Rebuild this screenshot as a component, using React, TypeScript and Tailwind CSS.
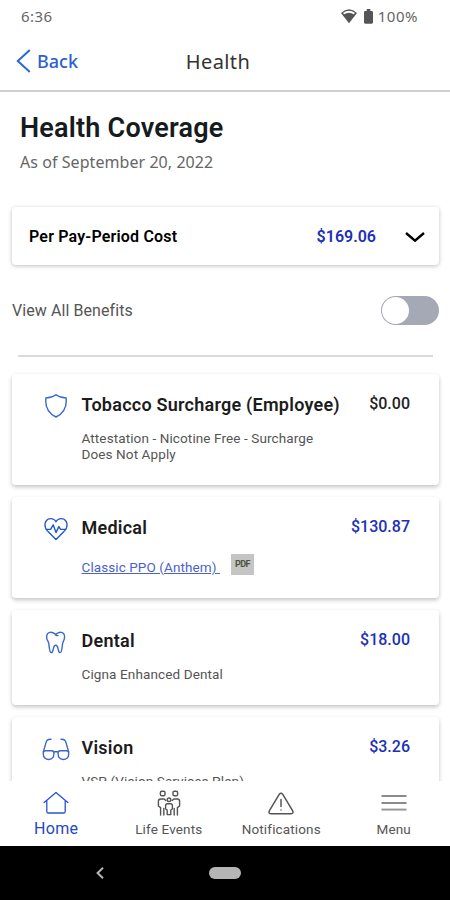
import type { ReactNode } from "react";

type Benefit = {
  name: string;
  price: string;
  icon: ReactNode;
  plan: ReactNode;
  muted?: boolean;
};

function ShieldIcon() {
  return (
    <svg width="24" height="26" viewBox="0 0 24 26" fill="none" stroke="#3a68c8" strokeWidth="1.4" strokeLinejoin="round">
      <path d="M12 1.8C9.6 3.7 5.6 4.9 2 4.7C1 11.8 3.2 19.6 12 24C20.8 19.6 23 11.8 22 4.7C18.4 4.9 14.4 3.7 12 1.8Z" />
    </svg>
  );
}

function HeartIcon() {
  return (
    <svg width="24" height="24" viewBox="0 0 24 24" fill="none" stroke="#2559c5" strokeWidth="1.4" strokeLinejoin="round" strokeLinecap="round">
      <path d="M12 4.8C11 2.8 9 1.6 6.6 1.6C2.6 1.6 -.3 6 1.6 11C2.4 12.8 3.4 14 4.3 14.8L12 22.6L19.7 14.8C20.6 14 21.6 12.8 22.4 11C24.3 6 21.4 1.6 17.4 1.6C15 1.6 13 2.8 12 4.8Z" />
      <path d="M2.4 12.4H6.6L9.2 7.8L12 15.6L14.8 9.6L16.6 12.4H21.6" />
    </svg>
  );
}

function ToothIcon() {
  return (
    <svg width="22" height="23" viewBox="0 0 22 23" fill="none" stroke="#3a68c8" strokeWidth="1.4" strokeLinejoin="round" strokeLinecap="round">
      <path d="M10.6 3.2C8.6 1.8 6.6 1 4.8 1.4C2.4 2 1.4 4.4 1.7 7C1.9 9.2 3.4 10.4 3.8 12.6C4.3 15.6 4.2 21.6 6.4 21.6C8.9 21.6 7.4 14.2 10.7 14.2C14 14.2 12.5 21.6 15 21.6C17.2 21.6 17 15.6 17.6 12.6C18 10.4 19.3 9.2 19.5 7C19.8 4.4 18.8 2 16.4 1.4C14 .9 12.2 2.3 10.6 3.2C9.6 3.6 11.6 4.8 13 4.6" />
    </svg>
  );
}

function GlassesIcon() {
  return (
    <svg width="28" height="23" viewBox="0 0 28 23" fill="none" stroke="#3a68c8" strokeWidth="1.4" strokeLinejoin="round" strokeLinecap="round">
      <path d="M9 1.3C5.9 1 4.6 2 4 4.6L1.4 13.6M19 1.3C22.1 1 23.4 2 24 4.6L26.6 13.6" />
      <path d="M1.3 15Q1.3 12.8 3.4 12.8H9.8Q11.9 12.8 11.9 15V16C11.9 19.4 9.6 21.5 6.6 21.5C3.6 21.5 1.3 19.4 1.3 16ZM16.1 15Q16.1 12.8 18.2 12.8H24.6Q26.7 12.8 26.7 15V16C26.7 19.4 24.4 21.5 21.4 21.5C18.4 21.5 16.1 19.4 16.1 16Z" />
      <path d="M11.5 13.8H16.5" />
    </svg>
  );
}

function HomeIcon() {
  return (
    <svg width="26" height="24" viewBox="0 0 26 24" fill="none" stroke="#2457cf" strokeWidth="1.3" strokeLinejoin="round" strokeLinecap="round">
      <path d="M1.2 11.6L13 1.6L24.8 11.6M3.8 9.8V20.4Q3.8 22 5.4 22H20.6Q22.2 22 22.2 20.4V9.8" />
    </svg>
  );
}

function FamilyIcon() {
  return (
    <svg width="24" height="26" viewBox="0 0 24 26" fill="none" stroke="#555" strokeWidth="1.4" strokeLinejoin="round" strokeLinecap="round">
      <rect x="3.4" y="1.2" width="4.6" height="4.6" rx="1.4" />
      <rect x="16" y="1.2" width="4.6" height="4.6" rx="1.4" />
      <circle cx="12" cy="9.8" r="1.8" />
      <path d="M3.6 25V17.6L1.4 16V11.2Q1.4 9 3.6 9H7.2L8.8 10.6M20.4 25V17.6L22.6 16V11.2Q22.6 9 20.4 9H16.8L15.2 10.6" />
      <path d="M8.6 19V15.6Q8.6 13.8 10.4 13.8H13.6Q15.4 13.8 15.4 15.6V19L13.8 20V24.6H10.2V20ZM6.8 25V18.4M17.2 25V18.4" />
    </svg>
  );
}

function WarningIcon() {
  return (
    <svg width="26" height="23" viewBox="0 0 26 23" fill="none" stroke="#555" strokeWidth="1.5" strokeLinejoin="round" strokeLinecap="round">
      <path d="M11.2 2.4Q13 .1 14.8 2.4L24.7 18.9Q25.7 21.6 23.2 21.8H2.8Q.3 21.6 1.3 18.9Z" />
      <path d="M13 7.6V14.6M13 17.9V18.1" />
    </svg>
  );
}

function MenuIcon() {
  return (
    <svg width="26" height="18" viewBox="0 0 26 18" fill="none" strokeWidth="1.6">
      <path d="M.5 2H25.5M.5 9H25.5" stroke="#666" />
      <path d="M.5 15.6H25.5" stroke="#999" strokeWidth="2" />
    </svg>
  );
}

const benefits: Benefit[] = [
  {
    name: "Tobacco Surcharge (Employee)",
    price: "$0.00",
    icon: <ShieldIcon />,
    muted: true,
    plan: (
      <p className="mt-[13px] text-[13.5px] leading-4 tracking-[0.11px] text-[#555]">
        Attestation - Nicotine Free - Surcharge
        <br />
        Does Not Apply
      </p>
    ),
  },
  {
    name: "Medical",
    price: "$130.87",
    icon: <HeartIcon />,
    plan: (
      <div className="mt-3.5 flex h-[21px] items-center">
        <a href="#" className="mt-1 text-[13.5px] leading-4 tracking-[0.09px] whitespace-pre text-[#4b63c9] underline">
          {"Classic PPO (Anthem) "}
        </a>
        <span className="ml-[11px] flex h-[21px] w-[23px] items-center justify-center bg-[#c4c4c4] text-[9px] font-bold tracking-[-0.6px] text-[#4a5340]">
          PDF
        </span>
      </div>
    ),
  },
  {
    name: "Dental",
    price: "$18.00",
    icon: <ToothIcon />,
    plan: <p className="mt-[13px] text-[13.5px] leading-4 tracking-[0.12px] text-[#555]">Cigna Enhanced Dental</p>,
  },
  {
    name: "Vision",
    price: "$3.26",
    icon: <GlassesIcon />,
    plan: <p className="mt-[13px] text-[13.5px] leading-4 tracking-[0.12px] text-[#555]">VSP (Vision Services Plan)</p>,
  },
];

const tabs = [
  { label: "Home", icon: <HomeIcon />, active: true },
  { label: "Life Events", icon: <FamilyIcon /> },
  { label: "Notifications", icon: <WarningIcon /> },
  { label: "Menu", icon: <MenuIcon /> },
];

function BenefitCard({ name, price, icon, plan, muted }: Benefit) {
  return (
    <div className="flex rounded-sm bg-white pt-[19px] pr-[29px] pb-[23px] pl-7 shadow-[0_2px_4px_rgba(0,0,0,0.24)]">
      <div className="flex h-[26px] w-8 shrink-0 items-center justify-center">{icon}</div>
      <div className="ml-[9.5px] min-w-0 flex-1 whitespace-nowrap">
        <div className="flex items-center justify-between">
          <h2 className="text-[18px] leading-6 font-semibold tracking-[0.24px] text-[#1c1c1c]">{name}</h2>
          <span className={`-mt-0.5 text-base leading-5 font-medium ${muted ? "text-[#222]" : "text-[#1c31b5]"}`}>
            {price}
          </span>
        </div>
        {plan}
      </div>
    </div>
  );
}

export default function App() {
  return (
    <div className="flex h-[900px] w-[450px] flex-col overflow-hidden bg-white font-['Roboto',sans-serif]">
      {/* Status bar */}
      <div className="flex h-8 shrink-0 items-center justify-between pr-8 pl-[21px] font-['Noto_Sans',sans-serif] text-[15px] text-[#666]">
        <span className="tracking-[0.4px]">6:36</span>
        <div className="flex items-center">
          <svg width="18" height="16" viewBox="0 0 18 16">
            <path d="M9 15.2L1 5Q9-2.4 17 5Z" fill="#555" />
            <path d="M3 5Q9 .6 15 5L13.8 6.2Q9 3.2 4.2 6.2Z" fill="#fff" />
          </svg>
          <svg className="ml-1.5" width="9" height="15" viewBox="0 0 10 16" preserveAspectRatio="none" fill="#555">
            <path d="M3 0H7V2H8.6Q10 2 10 3.4V14.4Q10 15.6 8.6 15.6H1.4Q0 15.6 0 14.4V3.4Q0 2 1.4 2H3Z" />
          </svg>
          <span className="ml-[5px] tracking-[0.5px]">100%</span>
        </div>
      </div>

      <header className="grid h-[60px] shrink-0 grid-cols-[1fr_auto_1fr] items-center border-b-2 border-[#ced1d1] pr-[14px] font-['Noto_Sans',sans-serif]">
        <button className="flex items-center pl-4 text-[18px] font-medium text-[#2b62c9]">
          <svg width="15" height="24" viewBox="0 0 15 24" fill="none" stroke="#2b67cf" strokeWidth="2">
            <path d="M13.8 1L1.8 12L13.8 23" />
          </svg>
          <span className="ml-[6px]">Back</span>
        </button>
        <h1 className="mt-0.5 text-[20px] tracking-[0.4px] text-[#333]">Health</h1>
      </header>

      <main className="min-h-0 flex-1 overflow-hidden px-3">
        <h2 className="mt-5 ml-2 text-[27px] leading-8 font-semibold tracking-[0.22px] text-[#161b1d]">
          Health Coverage
        </h2>
        <p className="mt-[7px] ml-2 font-['Noto_Sans',sans-serif] text-[16px] leading-[22px] tracking-[0.06px] text-[#666]">
          As of September 20, 2022
        </p>

        <div className="mt-[34px] mr-[-1px] flex h-[58px] items-center rounded-sm bg-white pt-px pr-[14px] pl-[17px] shadow-[0_1px_4px_rgba(0,0,0,0.26)]">
          <span className="text-base font-semibold tracking-[0.18px] text-black">Per Pay-Period Cost</span>
          <span className="ml-auto text-base font-semibold text-[#1c31b5]">$169.06</span>
          <svg className="ml-[29px]" width="20" height="12" viewBox="0 0 20 12" fill="none" stroke="#000" strokeWidth="2.4">
            <path d="M1 2L10 9.6L19 2" />
          </svg>
        </div>

        <div className="mt-[30px] mr-[-1px] flex h-[30px] items-center justify-between">
          <span className="mt-0.5 text-[16px] tracking-[0.08px] text-[#555]">View All Benefits</span>
          <button role="switch" aria-checked="false" aria-label="View All Benefits" className="flex h-[29px] w-[58px] rounded-full bg-[#a4a9b5] p-px">
            <span className="size-[27px] rounded-full bg-white" />
          </button>
        </div>

        <hr className="mt-[30px] mr-[5px] ml-1.5 border-t-2 border-[#dadada]" />

        <div className="mt-[17px] mr-[-1px] flex flex-col gap-3">
          {benefits.map((benefit) => (
            <BenefitCard key={benefit.name} {...benefit} />
          ))}
        </div>
      </main>

      <nav className="grid h-[65px] shrink-0 grid-cols-4 bg-white">
        {tabs.map((tab) => (
          <a key={tab.label} href="#" className="flex flex-col items-center pt-[7px] whitespace-nowrap">
            <span className="flex h-[30px] items-center">{tab.icon}</span>
            <span
              className={
                tab.active
                  ? "mt-px text-[16px] leading-5 tracking-[0.3px] text-[#2448c4]"
                  : "mt-px text-[13.5px] leading-5 tracking-[0.15px] text-[#555]"
              }
            >
              {tab.label}
            </span>
          </a>
        ))}
      </nav>

      {/* Android navigation bar */}
      <div className="grid h-[54px] shrink-0 grid-cols-[200px_50px_200px] items-center justify-items-center bg-black">
        <svg width="8" height="12" viewBox="0 0 8 12" fill="none" stroke="#b5b5b5" strokeWidth="2">
          <path d="M7 .8L1.6 6L7 11.2" />
        </svg>
        <span className="h-3 w-8 rounded-full bg-[#b5b5b5]" />
      </div>
    </div>
  );
}
